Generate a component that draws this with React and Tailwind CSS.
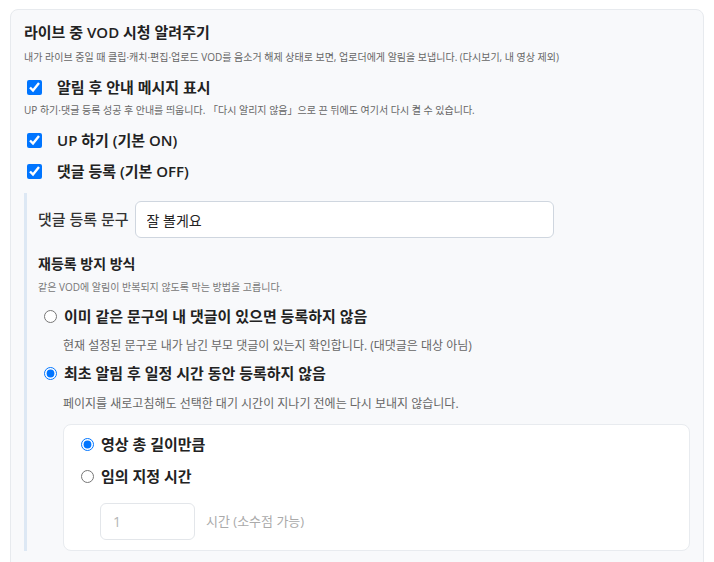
import { useState } from "react";

const font = "font-['Open_Sans','Noto_Sans_CJK_KR',sans-serif]";

const CheckRow = ({ label, checked, onChange, className = "" }) => (
  <label className={`flex h-[20px] items-center ${className}`}>
    <input
      type="checkbox"
      checked={checked}
      onChange={onChange}
      className="m-0 ml-[3px] mr-[15px] h-[15px] w-[15px]"
    />
    <span className="text-[15px] font-semibold leading-[20px] text-[#222]">{label}</span>
  </label>
);

const RadioRow = ({ name, label, checked, onChange, className = "" }) => (
  <label className={`flex h-[20px] items-center ${className}`}>
    <input
      type="radio"
      name={name}
      checked={checked}
      onChange={onChange}
      className="m-0 mr-[7px] h-[13px] w-[13px]"
    />
    <span className="text-[15px] font-semibold leading-[20px] text-[#222]">{label}</span>
  </label>
);

export default function App() {
  const [showNotice, setShowNotice] = useState(true)
  const [upOn, setUpOn] = useState(true)
  const [commentOn, setCommentOn] = useState(true)
  const [comment, setComment] = useState("잘 볼게요")
  const [mode, setMode] = useState("time")
  const [wait, setWait] = useState("length")

  return (
    <div className={`min-h-screen bg-white px-[10px] pt-[9px] ${font}`}>
      <div className="rounded-[8px] border border-[#e7eaee] bg-[#f8f9fb] px-[13px] pb-[20px] pt-[12px]">
        {/* Header */}
        <h2 className="text-[15px] font-semibold leading-[20px] text-[#222]">
          라이브 중 VOD 시청 알려주기
        </h2>
        <p className="mt-[8px] text-[10px] leading-[14px] text-[#666]">
          내가 라이브 중일 때 클립·캐치·편집·업로드 VOD를 음소거 해제 상태로 보면, 업로더에게 알림을 보냅니다. (다시보기, 내 영상 제외)
        </p>

        {/* Options */}
        <CheckRow
          className="mt-[13px]"
          label="알림 후 안내 메시지 표시"
          checked={showNotice}
          onChange={() => setShowNotice(!showNotice)}
        />
        <p className="mt-[6px] text-[10px] leading-[14px] text-[#666]">
          UP 하기·댓글 등록 성공 후 안내를 띄웁니다. 「다시 알리지 않음」으로 끈 뒤에도 여기서 다시 켤 수 있습니다.
        </p>
        <CheckRow
          className="mt-[13px]"
          label="UP 하기 (기본 ON)"
          checked={upOn}
          onChange={() => setUpOn(!upOn)}
        />
        <CheckRow
          className="mt-[11px]"
          label="댓글 등록 (기본 OFF)"
          checked={commentOn}
          onChange={() => setCommentOn(!commentOn)}
        />

        {/* Comment settings */}
        <div className="mt-[12px] border-l-[3px] border-[#dde8f4] pl-[11px] pt-[8px]">
          <div className="flex items-center gap-[6px]">
            <span className="text-[15px] font-medium text-[#333]">댓글 등록 문구</span>
            <input
              value={comment}
              onChange={(e) => setComment(e.target.value)}
              className="h-[37px] w-[419px] rounded-[6px] border border-[#cfd6df] bg-white px-[11px] text-[14px] text-[#222] outline-none"
            />
          </div>

          <h3 className="mt-[17px] text-[14px] font-semibold leading-[18px] text-[#222]">재등록 방지 방식</h3>
          <p className="mt-[8px] text-[10px] leading-[12px] text-[#777]">
            같은 VOD에 알림이 반복되지 않도록 막는 방법을 고릅니다.
          </p>

          <RadioRow
            className="ml-[6px] mt-[13px]"
            name="mode"
            label="이미 같은 문구의 내 댓글이 있으면 등록하지 않음"
            checked={mode === "exists"}
            onChange={() => setMode("exists")}
          />
          <p className="ml-[25px] mt-[12px] text-[12px] leading-[16px] text-[#666]">
            현재 설정된 문구로 내가 남긴 부모 댓글이 있는지 확인합니다. (대댓글은 대상 아님)
          </p>
          <RadioRow
            className="ml-[6px] mt-[9px]"
            name="mode"
            label="최초 알림 후 일정 시간 동안 등록하지 않음"
            checked={mode === "time"}
            onChange={() => setMode("time")}
          />
          <p className="ml-[25px] mt-[13px] text-[12px] leading-[16px] text-[#666]">
            페이지를 새로고침해도 선택한 대기 시간이 지나기 전에는 다시 보내지 않습니다.
          </p>

          {/* Wait time */}
          <div className="ml-[25px] mt-[12px] rounded-[8px] border border-[#e8ebef] bg-white pb-[10px] pl-[17px] pt-[9px]">
            <RadioRow
              name="wait"
              label="영상 총 길이만큼"
              checked={wait === "length"}
              onChange={() => setWait("length")}
            />
            <RadioRow
              className="mt-[12px]"
              name="wait"
              label="임의 지정 시간"
              checked={wait === "custom"}
              onChange={() => setWait("custom")}
            />
            <div className="ml-[19px] mt-[17px] flex items-center gap-[11px]">
              <input
                type="number"
                defaultValue="1"
                disabled={wait !== "custom"}
                className="h-[37px] w-[95px] rounded-[6px] border border-[#e3e6ea] bg-white px-[12px] text-[14px] text-[#b5b5b5] outline-none"
              />
              <span className="text-[13px] text-[#aaa]">시간 (소수점 가능)</span>
            </div>
          </div>
        </div>
      </div>
    </div>
  );
}
